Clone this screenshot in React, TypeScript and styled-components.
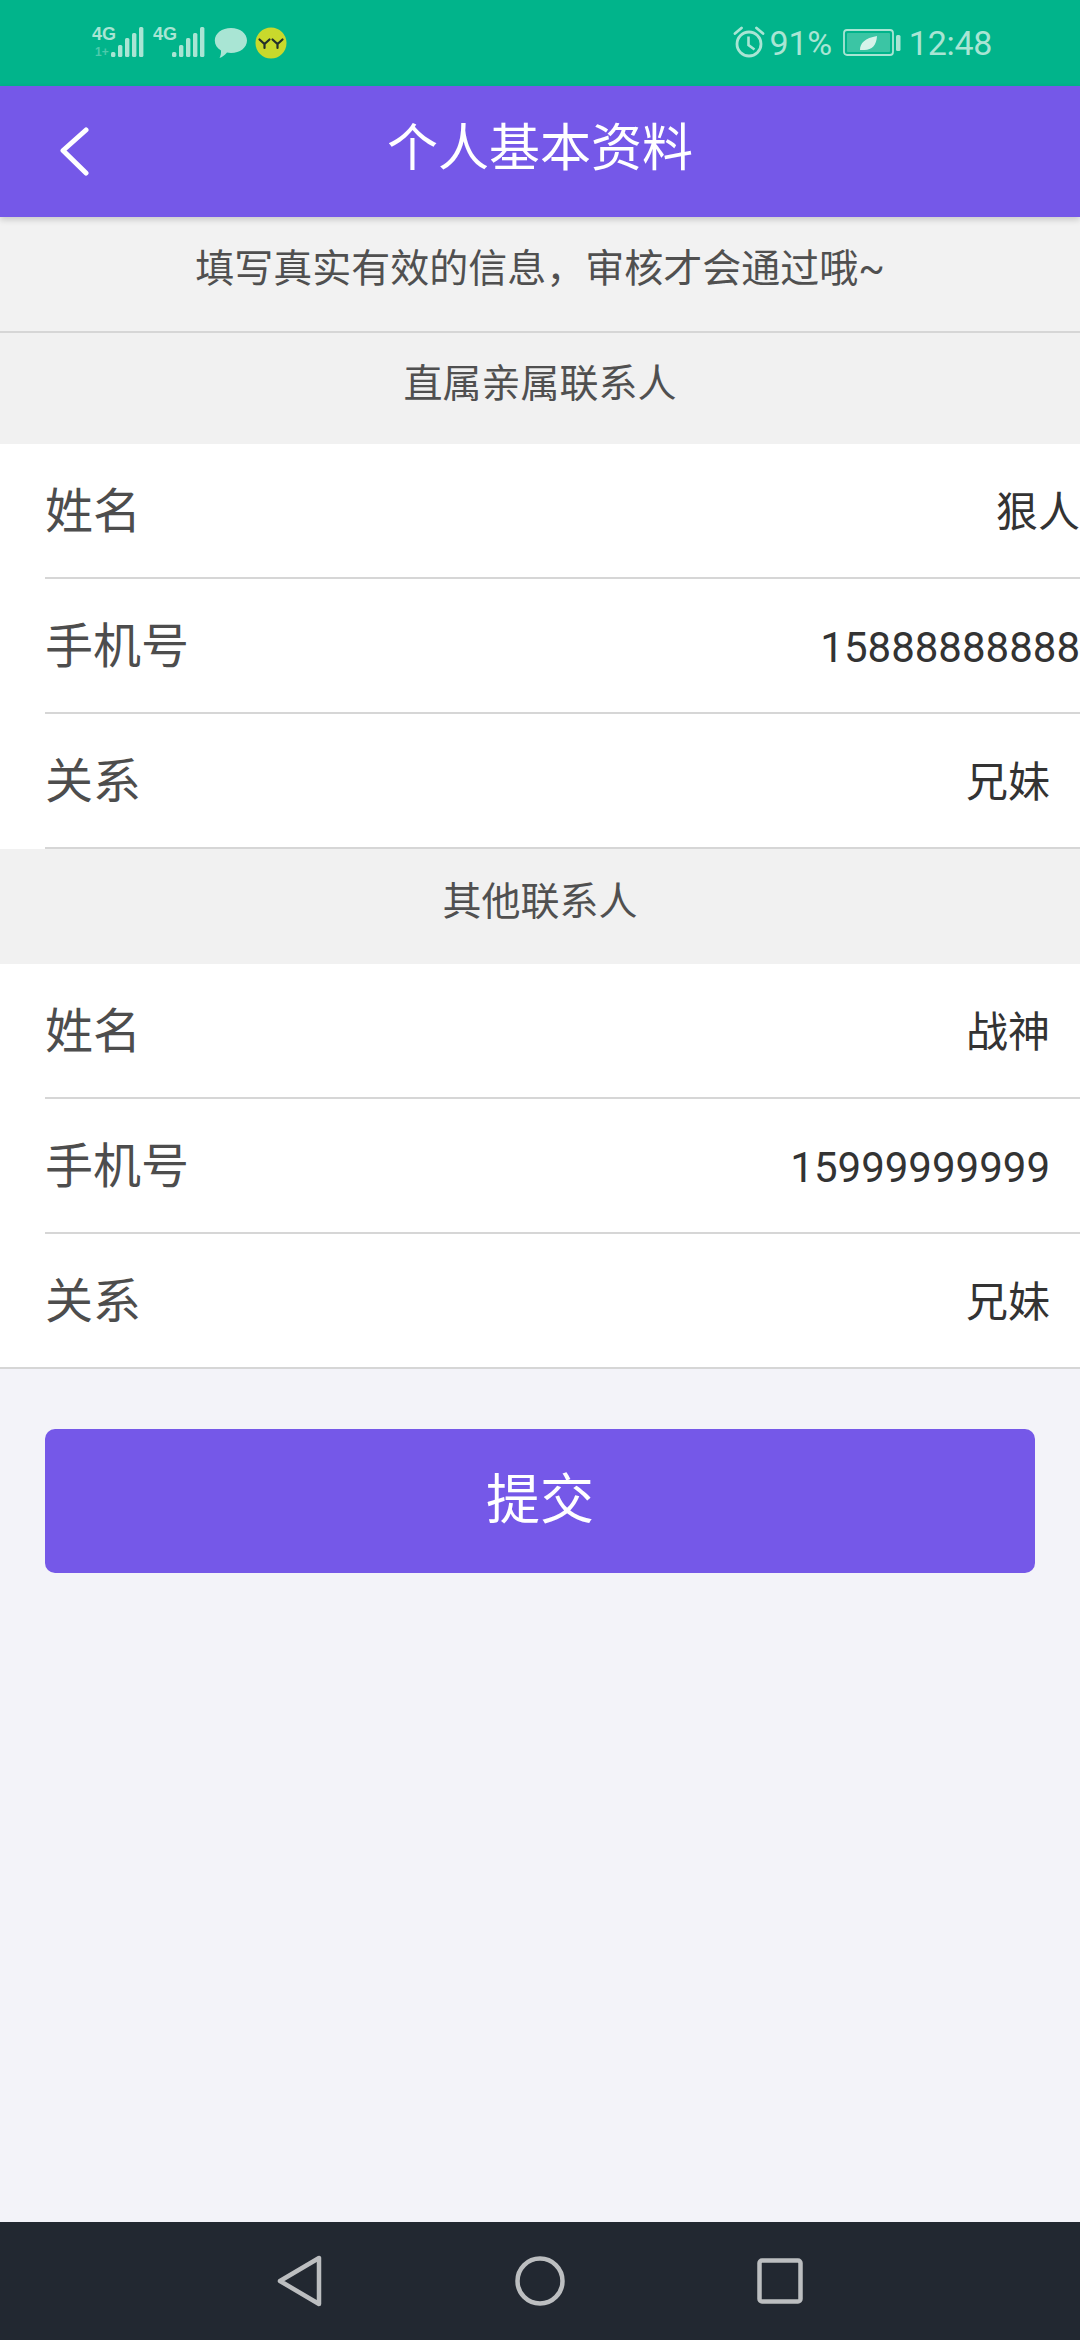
import { createGlobalStyle } from 'styled-components';
import styled from 'styled-components';

const PURPLE = '#7558e8';
const ICON = '#a9e5d4';

const GlobalStyle = createGlobalStyle`
  * {
    box-sizing: border-box;
  }
  html,
  body {
    margin: 0;
    padding: 0;
    background: #f3f3f9;
    font-family: Roboto, "Noto Sans CJK SC", sans-serif;
  }
`;

const Page = styled.div`
  width: 1080px;
  height: 2340px;
  display: flex;
  flex-direction: column;
  overflow: hidden;
  background: #f3f3f9;
`;

const StatusBar = styled.div`
  height: 86px;
  flex: none;
  display: flex;
  align-items: center;
  justify-content: space-between;
  padding: 0 88px 0 92px;
  background: #01b48b;
  color: ${ICON};
`;

const StatusGroup = styled.div<{ $gap?: number }>`
  display: flex;
  align-items: center;
  gap: ${(p) => p.$gap ?? 0}px;
`;

const StatusText = styled.span<{ $left: number; $right?: number }>`
  font-size: 34px;
  line-height: 40px;
  margin-left: ${(p) => p.$left}px;
  margin-right: ${(p) => p.$right ?? 0}px;
  letter-spacing: -0.3px;
`;

const Header = styled.header`
  position: relative;
  z-index: 1;
  height: 131px;
  flex: none;
  display: flex;
  align-items: center;
  justify-content: center;
  padding-bottom: 6px;
  background: ${PURPLE};
  box-shadow: 0 3px 6px rgba(0, 0, 0, 0.16);
`;

const BackIcon = styled.svg`
  position: absolute;
  left: 58px;
  top: 40px;
`;

const Title = styled.h1`
  margin: 0;
  font-size: 51px;
  line-height: 70px;
  font-weight: 400;
  color: #fff;
`;

const Notice = styled.div`
  height: 116px;
  flex: none;
  padding-top: 31px;
  text-align: center;
  font-size: 39px;
  line-height: 42px;
  color: #505050;
  background: #f2f2f2;
  border-bottom: 2px solid #d6d6d6;
`;

const SectionTitle = styled.div<{ $height: number }>`
  height: ${(p) => p.$height}px;
  flex: none;
  padding-top: ${(p) => p.$height / 2 - 26}px;
  text-align: center;
  font-size: 39px;
  line-height: 42px;
  color: #505050;
  background: #f1f1f1;
`;

const Group = styled.section`
  flex: none;
  background: #fff;
`;

const Row = styled.div<{ $fullLine?: boolean }>`
  height: 135px;
  margin-left: ${(p) => (p.$fullLine ? 0 : 45)}px;
  padding-left: ${(p) => (p.$fullLine ? 45 : 0)}px;
  display: flex;
  align-items: center;
  justify-content: space-between;
  border-bottom: 2px solid #d6d6d6;
`;

const Label = styled.span`
  font-size: 48px;
  line-height: 60px;
  color: #4d4d4d;
  transform: translateY(1px);
`;

const Value = styled.span<{ $flush?: boolean }>`
  margin-right: ${(p) => (p.$flush ? 0 : 30)}px;
  padding-top: 4px;
  font-size: 42px;
  line-height: 56px;
  color: #333;
`;

const Content = styled.main`
  flex: 1;
  padding: 60px 45px 0;
`;

const Submit = styled.button`
  width: 100%;
  height: 144px;
  padding: 0 0 12px;
  border: none;
  border-radius: 10px;
  background: ${PURPLE};
  color: #fff;
  font-family: inherit;
  font-size: 54px;
`;

const NavBar = styled.nav`
  height: 118px;
  flex: none;
  display: flex;
  align-items: center;
  justify-content: center;
  gap: 192px;
  background: #222831;
`;

function Signal({ first }: { first?: boolean }) {
  const bars = [
    [19, 52],
    [26, 45],
    [33, 38],
    [40, 33],
    [47, 27],
  ];
  return (
    <svg width="54" height="86" viewBox="0 0 54 86" style={{ display: 'block' }}>
      <text x="0" y="40" fontSize="18" fontWeight="700" fill={ICON} fontFamily="Liberation Sans Narrow, Liberation Sans, sans-serif">
        4G
      </text>
      {first && (
        <text x="3" y="56" fontSize="12" fontWeight="700" fill={ICON} opacity="0.45" fontFamily="Liberation Sans, sans-serif">
          1+
        </text>
      )}
      {bars.map(([x, top]) => (
        <rect key={x} x={x} y={top} width="4.400" height={57 - top} rx="1.500" fill={ICON} />
      ))}
    </svg>
  );
}

function Bubble() {
  return (
    <svg width="34" height="86" viewBox="0 0 34 86">
      <path d="M17 28c9 0 16 5.400 16 12.600S26 53 17 53c-1.500 0-2.800-.1-4-.4C10.500 55.500 8 57.500 5.500 58c1-2 1.700-4.300 1.500-7.500C3 48.200.8 44.800.8 40.600.8 33.400 8 28 17 28z" fill="#a9e5d4" />
    </svg>
  );
}

function YyBadge() {
  return (
    <svg width="32" height="86" viewBox="0 0 32 86">
      <circle cx="16" cy="43" r="15.500" fill="#c9d92c" />
      <path d="M4.500 39.500l5 4.500 5-4.500M9.500 44v4M17.500 39.500l5 4.500 5-4.500M22.500 44v4" fill="none" stroke="#23302a" strokeWidth="2.200" strokeLinecap="round" />
    </svg>
  );
}

function Alarm() {
  return (
    <svg width="32" height="86" viewBox="0 0 32 86">
      <circle cx="16" cy="44" r="12" fill="none" stroke={ICON} strokeWidth="2.800" />
      <path d="M15.500 36.500V45l6 4.500" fill="none" stroke={ICON} strokeWidth="2.600" />
      <path d="M2 33.500l6.500-5.500M30 33.500L23.500 28" fill="none" stroke={ICON} strokeWidth="2.800" strokeLinecap="round" />
    </svg>
  );
}

function Battery() {
  return (
    <svg width="60" height="86" viewBox="0 0 60 86">
      <rect x="1" y="30" width="49" height="25" rx="3" fill="none" stroke={ICON} strokeWidth="1.800" />
      <rect x="4" y="33" width="43" height="19" rx="1" fill={ICON} opacity="0.35" />
      <rect x="53" y="35" width="4.500" height="16" rx="1.500" fill={ICON} />
      <path d="M17 50c0-7 5-12 17-14-.5 9-5 14-12.500 14-1.500 0-3-.2-4.500 0z" fill="#d7f3ea" />
    </svg>
  );
}

const contacts = [
  {
    title: '直属亲属联系人',
    titleHeight: 111,
    name: '狠人',
    phone: '15888888888',
    relation: '兄妹',
    flush: true,
    fullLine: false,
  },
  {
    title: '其他联系人',
    titleHeight: 115,
    name: '战神',
    phone: '15999999999',
    relation: '兄妹',
    flush: false,
    fullLine: true,
  },
];

function App() {
  return (
    <Page>
      <GlobalStyle />
      <StatusBar>
        <StatusGroup $gap={7}>
          <Signal first />
          <Signal />
          <Bubble />
          <YyBadge />
        </StatusGroup>
        <StatusGroup>
          <Alarm />
          <StatusText $left={5} $right={11}>91%</StatusText>
          <Battery />
          <StatusText $left={6}>12:48</StatusText>
        </StatusGroup>
      </StatusBar>
      <Header>
        <BackIcon width="32" height="50" viewBox="0 0 32 50">
          <path d="M28 4L5 24.500 28 47" fill="none" stroke="#fff" strokeWidth="5" strokeLinecap="round" strokeLinejoin="round" />
        </BackIcon>
        <Title>个人基本资料</Title>
      </Header>
      <Notice>填写真实有效的信息，审核才会通过哦~</Notice>
      {contacts.map((c) => (
        <div key={c.title}>
          <SectionTitle $height={c.titleHeight}>{c.title}</SectionTitle>
          <Group>
            <Row>
              <Label>姓名</Label>
              <Value $flush={c.flush}>{c.name}</Value>
            </Row>
            <Row>
              <Label>手机号</Label>
              <Value $flush={c.flush}>{c.phone}</Value>
            </Row>
            <Row $fullLine={c.fullLine}>
              <Label>关系</Label>
              <Value>{c.relation}</Value>
            </Row>
          </Group>
        </div>
      ))}
      <Content>
        <Submit>提交</Submit>
      </Content>
      <NavBar>
        <svg width="46" height="52" viewBox="0 0 46 52">
          <path d="M3 26L42 3v46z" fill="none" stroke="#bcbec0" strokeWidth="4.500" strokeLinejoin="round" />
        </svg>
        <svg width="50" height="50" viewBox="0 0 50 50">
          <circle cx="25" cy="25" r="22.500" fill="none" stroke="#bcbec0" strokeWidth="4.500" />
        </svg>
        <svg width="46" height="46" viewBox="0 0 46 46">
          <rect x="2.500" y="2.500" width="41" height="41" rx="2.500" fill="none" stroke="#bcbec0" strokeWidth="4.500" />
        </svg>
      </NavBar>
    </Page>
  );
}

export default App;
